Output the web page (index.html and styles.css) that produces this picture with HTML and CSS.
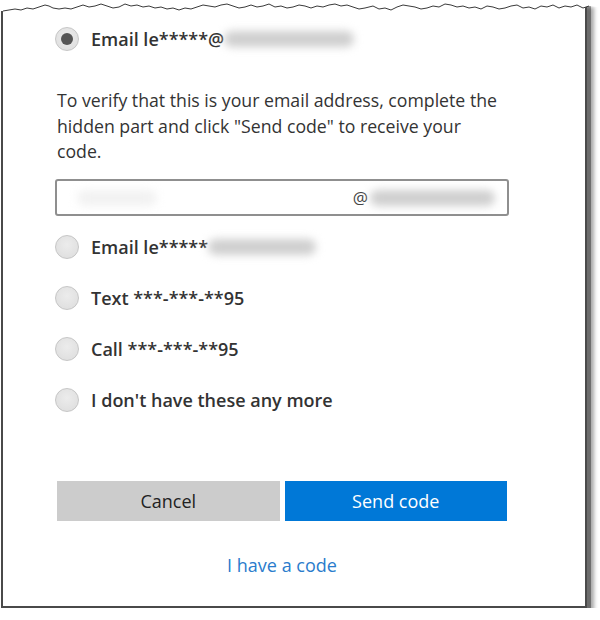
FILE: index.html
```html
<!DOCTYPE html>
<html>
<head>
  <title>Verify your identity</title>
  <link rel="stylesheet" href="styles.css">
</head>
<body>
  <div class="frame">
    <svg class="torn-edge" width="600" height="16" viewBox="0 0 600 16">
      <polygon class="torn-cover" points="-4,0 604,0 604,8 586,6 580,8 574,5 568,7 562,6 556,8 550,5 544,7 538,6 532,9 526,7 520,8 514,5 508,6 502,8 496,9 490,7 484,6 478,9 472,7 466,8 460,6 454,7 448,5 442,4 436,7 430,6 424,8 418,9 412,7 406,6 400,5 394,7 388,10 382,8 376,9 370,6 362,8 356,9 350,7 344,5 338,6 332,4 326,5 320,7 314,6 308,8 302,6 296,5 290,7 284,8 278,6 272,7 266,4 260,6 254,7 248,5 242,7 236,8 230,6 224,4 218,5 212,7 206,6 200,5 194,7 188,9 182,8 176,10 170,8 164,9 158,7 152,8 146,6 140,7 134,5 128,6 122,4 116,7 110,8 104,6 98,4 92,6 86,7 80,5 74,7 68,9 62,8 56,9 50,8 46,6 42,5 36,7 30,9 24,8 18,10 12,9 6,10 0,11 -4,11"/>
      <polyline class="torn-line" points="0,11 6,10 12,9 18,10 24,8 30,9 36,7 42,5 46,6 50,8 56,9 62,8 68,9 74,7 80,5 86,7 92,6 98,4 104,6 110,8 116,7 122,4 128,6 134,5 140,7 146,6 152,8 158,7 164,9 170,8 176,10 182,8 188,9 194,7 200,5 206,6 212,7 218,5 224,4 230,6 236,8 242,7 248,5 254,7 260,6 266,4 272,7 278,6 284,8 290,7 296,5 302,6 308,8 314,6 320,7 326,5 332,4 338,6 344,5 350,7 356,9 362,8 370,6 376,9 382,8 388,10 394,7 400,5 406,6 412,7 418,9 424,8 430,6 436,7 442,4 448,5 454,7 460,6 466,8 472,7 478,9 484,6 490,7 496,9 502,8 508,6 514,5 520,8 526,7 532,9 538,6 544,7 550,5 556,8 562,6 568,7 574,5 580,8 586,6"/>
    </svg>

    <div class="option">
      <span class="radio checked"></span>
      <span class="label">Email le*****@</span>
      <span class="smudge smudge-wide"></span>
    </div>

    <p class="hint">To verify that this is your email address, complete the hidden part and click "Send code" to receive your code.</p>

    <div class="email-field">
      <span class="smudge smudge-faint"></span>
      <span class="at">@</span>
      <span class="smudge smudge-domain"></span>
    </div>

    <div class="options">
      <div class="option">
        <span class="radio"></span>
        <span class="label">Email le*****</span>
        <span class="smudge smudge-short"></span>
      </div>
      <div class="option">
        <span class="radio"></span>
        <span class="label">Text ***-***-**95</span>
      </div>
      <div class="option">
        <span class="radio"></span>
        <span class="label">Call ***-***-**95</span>
      </div>
      <div class="option">
        <span class="radio"></span>
        <span class="label">I don't have these any more</span>
      </div>
    </div>

    <div class="actions">
      <div class="buttons">
        <button class="btn btn-cancel">Cancel</button>
        <button class="btn btn-send">Send code</button>
      </div>
      <a class="code-link" href="#">I have a code</a>
    </div>
  </div>
</body>
</html>
```

FILE: styles.css
```css
body {
  margin: 0;
  background-color: #fff;
  font-family: "Open Sans", Arial, sans-serif;
  color: #333;
}

.frame {
  position: relative;
  box-sizing: border-box;
  width: 586px;
  margin-left: 1px;
  padding: 14px 0 29px 52px;
  background-color: #fff;
  border: 2px solid #4a4a4a;
  border-top: none;
  box-shadow: 4px 4px 0 rgba(0, 0, 0, 0.35), 7px 7px 4px rgba(0, 0, 0, 0.35);
}

.torn-edge {
  position: absolute;
  top: 0;
  left: -3px;
  overflow: visible;
}

.torn-cover {
  fill: #fff;
  transform: translateX(3px);
}

.torn-line {
  fill: none;
  stroke: #3a3a3a;
  stroke-width: 1;
  transform: translateX(3px);
}

.option {
  display: flex;
  align-items: center;
  height: 50px;
}

.options .option {
  height: 51px;
}

.radio {
  box-sizing: border-box;
  width: 24px;
  height: 24px;
  margin-right: 12px;
  border-radius: 50%;
  border: 1px solid #c6c6c6;
  background: radial-gradient(circle at 50% 40%, #ececec 0%, #dcdcdc 100%);
  display: flex;
  align-items: center;
  justify-content: center;
  flex-shrink: 0;
}

.radio.checked::after {
  content: "";
  width: 12px;
  height: 12px;
  border-radius: 50%;
  background-color: #555;
}

.label {
  font-size: 18px;
  font-weight: 600;
  color: #333;
}

.smudge {
  display: inline-block;
  height: 16px;
  background-color: #cfcfcf;
  border-radius: 8px;
  filter: blur(4px);
}

.smudge-wide {
  width: 130px;
  margin-left: 0;
}

.smudge-short {
  width: 108px;
  margin-left: 0;
}

.hint {
  width: 444px;
  margin: 24px 0 0 2px;
  font-size: 17.7px;
  line-height: 25.5px;
  color: #333;
}

.email-field {
  box-sizing: border-box;
  display: flex;
  align-items: center;
  width: 454px;
  height: 37px;
  margin-top: 14.5px;
  padding: 0 12px 0 20px;
  border: 2px solid #8f8f8f;
  border-radius: 3px;
}

.at {
  font-size: 17px;
  color: #444;
  margin-left: auto;
}

.smudge-faint {
  width: 80px;
  background-color: #f2f2f2;
}

.smudge-domain {
  width: 125px;
  margin-left: 2px;
}

.options {
  margin-top: 5px;
}

.actions {
  width: 450px;
  margin: 56px 0 0 2px;
  text-align: center;
}

.buttons {
  display: flex;
  gap: 5px;
}

.btn {
  flex: 1;
  height: 40px;
  border: none;
  font-family: "Open Sans", Arial, sans-serif;
  font-size: 18px;
  cursor: pointer;
}

.btn-cancel {
  background-color: #cccccc;
  color: #222;
}

.btn-send {
  background-color: #0078d7;
  color: #fff;
}

.code-link {
  display: inline-block;
  margin-top: 32px;
  font-size: 18px;
  line-height: 24px;
  color: #2a7ccc;
  text-decoration: none;
}
```
